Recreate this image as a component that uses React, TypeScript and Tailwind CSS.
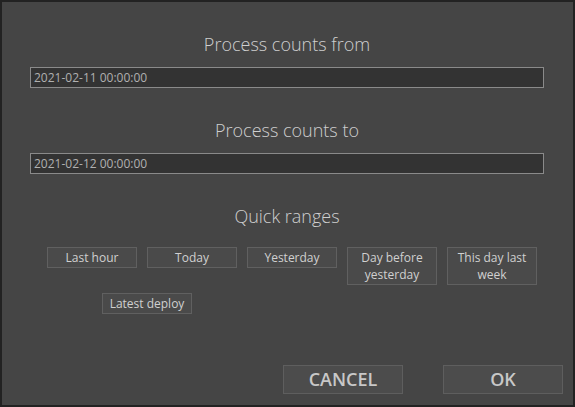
import React from "react";

const quickRanges = ["Last hour", "Today", "Yesterday", "Day before yesterday", "This day last week"];

const RangeButton = ({ label }: { label: string }) => (
  <button className="w-[90px] border border-[#606060] bg-[#4a4a4a] px-1 py-[1px] text-[12px] leading-[17px] text-[#d0d0d0]">
    {label}
  </button>
);

const DateField = ({ value }: { value: string }) => (
  <input
    readOnly
    value={value}
    className="mt-[10px] block h-[21px] w-full border border-[#8a8a8a] bg-[#333333] px-[3px] text-[12px] text-[#b0b0b0] outline-none"
  />
);

export default function App() {
  return (
    <div className="h-[407px] w-[575px] border-2 border-[#222222] bg-[#454545] font-['Open_Sans','Noto_Sans',sans-serif]">
      <div className="flex h-full flex-col pl-[28px] pr-[29px] pt-[30px]">
        <h2 className="text-center text-[18px] font-light leading-[25px] text-[#cfcfcf]">
          Process counts from
        </h2>
        <DateField value="2021-02-11 00:00:00" />

        <h2 className="mt-[30px] text-center text-[18px] font-light leading-[25px] text-[#cfcfcf]">
          Process counts to
        </h2>
        <DateField value="2021-02-12 00:00:00" />

        <h2 className="mt-[30px] text-center text-[18px] font-light leading-[25px] text-[#cfcfcf]">
          Quick ranges
        </h2>

        <div className="mt-[18px] flex items-start gap-[10px] pl-[17px]">
          {quickRanges.map((r) => (
            <RangeButton key={r} label={r} />
          ))}
        </div>
        <div className="mt-[8px] flex pl-[72px]">
          <RangeButton label="Latest deploy" />
        </div>

        <div className="mt-auto mb-[11px] -mr-[19px] flex justify-end gap-[40px]">
          <button className="h-[29px] w-[120px] border border-[#5e5e5e] bg-[#4c4c4c] text-[18px] font-semibold text-[#c8c8c8]">
            CANCEL
          </button>
          <button className="h-[29px] w-[120px] border border-[#5e5e5e] bg-[#4c4c4c] text-[18px] font-semibold text-[#c8c8c8]">
            OK
          </button>
        </div>
      </div>
    </div>
  );
}
